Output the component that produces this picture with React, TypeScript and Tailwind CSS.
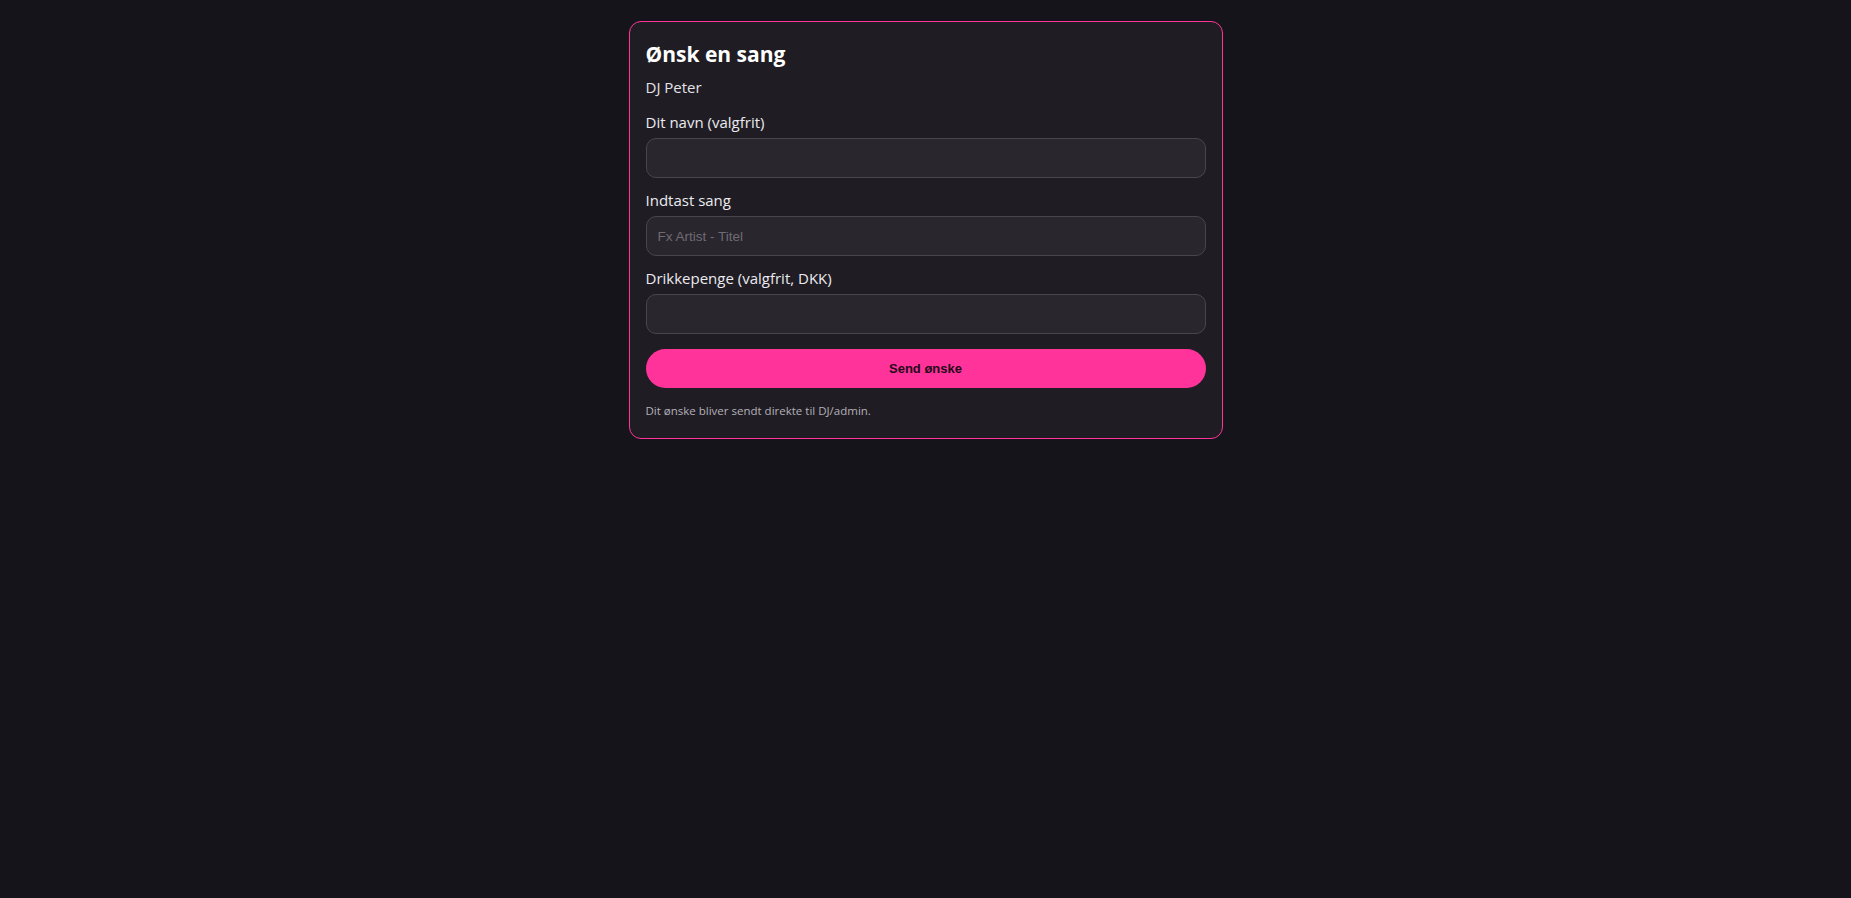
import React from "react";

export default function App() {
  return (
    <div className="min-h-[898px] w-full bg-[#16141b] pt-[21px]" style={{ fontFamily: '"Open Sans", "Noto Sans", sans-serif' }}>
      <div className="mx-auto w-[594px] rounded-xl border border-[#ff3399] bg-[#1f1d23] px-4 pt-[18px] pb-[19px]">
        <h1 className="text-[21px] font-bold leading-[28px] text-white">Ønsk en sang</h1>
        <div className="mt-[9px] text-[15px] leading-[20px] text-[#e4e2e8]">DJ Peter</div>
        <div className="mt-[15px] flex flex-col">
          <label className="mb-[6px] text-[15px] leading-[20px] text-[#eceaf0]">Dit navn (valgfrit)</label>
          <input className="h-[40px] rounded-[10px] border border-[#48454e] bg-[#29262d] px-[11px] text-[14px] text-white outline-none" />
          <label className="mt-[12px] mb-[6px] text-[15px] leading-[20px] text-[#eceaf0]">Indtast sang</label>
          <input
            placeholder="Fx Artist - Titel"
            className="h-[40px] rounded-[10px] border border-[#48454e] bg-[#29262d] px-[11px] text-[13.5px] text-white outline-none placeholder:text-[#6f6b74]"
            style={{ fontFamily: '"Liberation Sans", Arial, sans-serif' }}
          />
          <label className="mt-[12px] mb-[6px] text-[15px] leading-[20px] text-[#eceaf0]">Drikkepenge (valgfrit, DKK)</label>
          <input className="h-[40px] rounded-[10px] border border-[#48454e] bg-[#29262d] px-[11px] text-[14px] text-white outline-none" />
          <button
            className="mt-[15px] h-[39px] rounded-full bg-[#ff3399] text-[13px] font-bold text-[#24091a]"
            style={{ fontFamily: '"Liberation Sans", Arial, sans-serif' }}
          >
            Send ønske
          </button>
          <p className="mt-[15px] text-[11.5px] leading-[16px] text-[#b4b0b8]">Dit ønske bliver sendt direkte til DJ/admin.</p>
        </div>
      </div>
    </div>
  );
}
